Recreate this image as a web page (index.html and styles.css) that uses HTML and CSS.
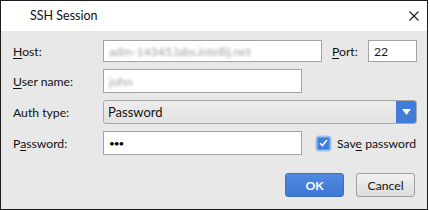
FILE: index.html
```html
<!DOCTYPE html>
<html>
<head>
<meta charset="utf-8">
<link rel="stylesheet" href="styles.css">
</head>
<body>
<div class="win">
  <div class="titlebar">
    <span class="title">SSH Session</span>
    <svg class="close" width="10" height="10" viewBox="0 0 10 10"><path d="M0.5 0.5 L9.5 9.5 M9.5 0.5 L0.5 9.5" stroke="#1a1a1a" stroke-width="1.1" fill="none"/></svg>
  </div>
  <div class="content">
    <div class="row">
      <span class="label"><u>H</u>ost:</span>
      <div class="input host"><span class="blur">adm-14345.labs.intellij.net</span></div>
      <span class="label port-label"><u>P</u>ort:</span>
      <div class="input port"><span>22</span></div>
    </div>
    <div class="row">
      <span class="label"><u>U</u>ser name:</span>
      <div class="input short"><span class="blur">john</span></div>
    </div>
    <div class="row">
      <span class="label">Auth type:</span>
      <div class="combo">
        <span class="combo-text">Password</span>
        <span class="combo-btn"><svg width="9" height="6" viewBox="0 0 9 6"><path d="M0 0 H9 L4.5 6 Z" fill="#fff"/></svg></span>
      </div>
    </div>
    <div class="row">
      <span class="label">P<u>a</u>ssword:</span>
      <div class="input short"><span class="dots">•••</span></div>
      <span class="check"><svg width="9" height="8" viewBox="0 0 9 8"><path d="M1 4.2 L3.4 6.6 L8 1" stroke="#fff" stroke-width="1.6" fill="none"/></svg></span>
      <span class="check-label">Sav<u>e</u> password</span>
    </div>
    <div class="buttons">
      <span class="btn ok">OK</span>
      <span class="btn cancel">Cancel</span>
    </div>
  </div>
</div>
</body>
</html>
```

FILE: styles.css
```css
html, body {
  margin: 0;
  padding: 0;
  background: #ffffff;
}
body {
  width: 430px;
  height: 210px;
  overflow: hidden;
  font-family: Lato, "Noto Sans", sans-serif;
  font-size: 12.2px;
  color: #1a1a1a;
}
.win {
  width: 426px;
  height: 208px;
  border: 1px solid #1c1c1c;
  background: #e8e8e8;
  display: flex;
  flex-direction: column;
}
.titlebar {
  height: 30px;
  background: #ffffff;
  display: flex;
  align-items: center;
  padding-left: 29px;
  padding-right: 8px;
}
.title {
  flex: 1;
  color: #111;
  font-size: 12.5px;
  margin-top: -2px;
}
.close {
  margin-top: -1px;
}
.content {
  padding: 9px 9px 0 12px;
  display: flex;
  flex-direction: column;
  gap: 7px;
}
.row {
  display: flex;
  align-items: center;
  white-space: nowrap;
}
.label {
  width: 90px;
  flex: none;
  color: #111;
}
u {
  text-decoration-thickness: 1px;
  text-underline-offset: 2px;
}
.input {
  height: 20px;
  border: 1px solid #a3a3a3;
  background: #fff;
  display: flex;
  align-items: center;
  padding-left: 5px;
  flex: none;
}
.host {
  width: 212px;
}
.port-label {
  margin-left: 10px;
  width: 36px;
}
.port {
  width: 42px;
}
.short {
  width: 192px;
  height: 22px;
}
.blur {
  color: #a0a0a0;
  filter: blur(1.4px);
}
.dots {
  font-size: 10px;
  letter-spacing: -1px;
  color: #000;
  margin-top: -1px;
}
.combo {
  width: 312px;
  height: 22px;
  border: 1px solid #a8a8a8;
  border-radius: 3px;
  background: linear-gradient(#ececec, #e2e2e2);
  display: flex;
  align-items: center;
  overflow: hidden;
  flex: none;
}
.combo-text {
  flex: 1;
  padding-left: 4px;
  font-size: 13px;
  color: #111;
}
.combo-btn {
  width: 21px;
  height: 24px;
  margin-right: -1px;
  background: #427bd8;
  display: flex;
  align-items: center;
  justify-content: center;
}
.check {
  width: 13px;
  height: 13px;
  margin-left: 15px;
  border-radius: 2px;
  background: #3e7fdc;
  border: 1px solid #6e9fe6;
  box-shadow: 0 0 0 1.5px #9fc0ee;
  display: flex;
  align-items: center;
  justify-content: center;
  box-sizing: border-box;
  flex: none;
}
.check-label {
  margin-left: 7px;
  color: #111;
}
.buttons {
  display: flex;
  justify-content: flex-end;
  gap: 12px;
  margin-top: 11px;
  padding-right: 3px;
}
.btn {
  width: 59px;
  height: 24px;
  box-sizing: border-box;
  border-radius: 3px;
  display: flex;
  align-items: center;
  justify-content: center;
}
.ok {
  background: linear-gradient(#5089e0, #3f78d4);
  border: 1px solid #3a6fc4;
  color: #fff;
  font-weight: bold;
}
.cancel {
  background: linear-gradient(#f2f2f2, #dddddd);
  border: 1px solid #a0a0a0;
  color: #111;
}
```
